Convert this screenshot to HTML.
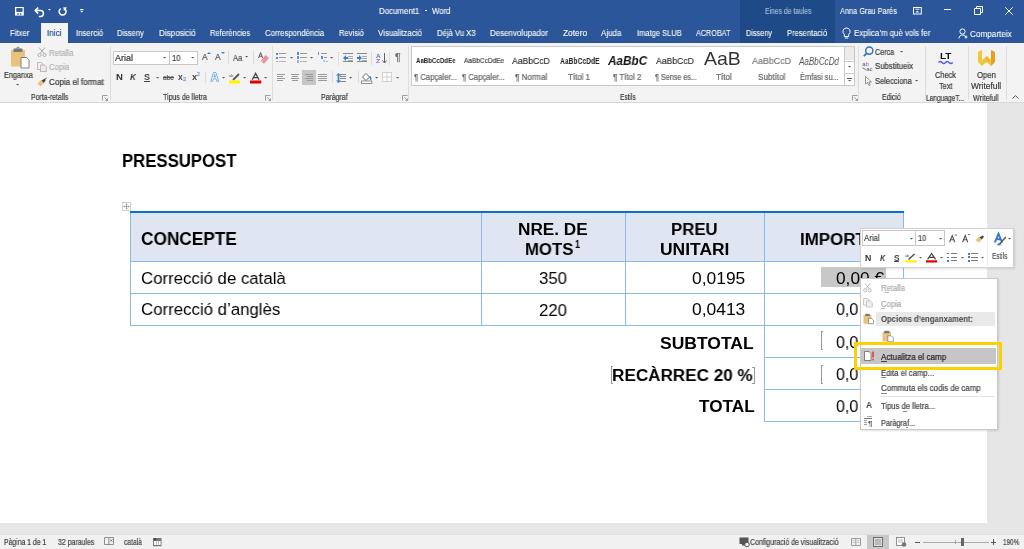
<!DOCTYPE html><html><head><meta charset="utf-8"><style>
html,body{margin:0;padding:0;width:1024px;height:549px;overflow:hidden;background:#fff;}
body{position:relative;font-family:"Liberation Sans",sans-serif;}
.t{position:absolute;white-space:nowrap;line-height:1;transform-origin:0 0;will-change:transform;}
.r{position:absolute;}
svg{position:absolute;overflow:visible;}
</style></head><body>
<div class="r" style="left:0px;top:0px;width:1024px;height:43px;background:#2b579a;"></div>
<div class="r" style="left:740px;top:0px;width:95px;height:43px;background:#1e4b87;"></div>
<div class="r" style="left:41px;top:23px;width:27px;height:20px;background:#f3f3f3;"></div>
<span class="t" style="left:9.80px;top:29.96px;font-size:8.2px;color:#fff;-webkit-text-stroke:0.08px #fff;transform:scaleX(0.9512);">Fitxer</span>
<span class="t" style="left:46.90px;top:29.96px;font-size:8.2px;color:#2b579a;-webkit-text-stroke:0.2px #2b579a;transform:scaleX(1.0003);">Inici</span>
<span class="t" style="left:75.80px;top:29.96px;font-size:8.2px;color:#fff;-webkit-text-stroke:0.08px #fff;transform:scaleX(0.9477);">Inserció</span>
<span class="t" style="left:117.20px;top:29.96px;font-size:8.2px;color:#fff;-webkit-text-stroke:0.08px #fff;transform:scaleX(0.9194);">Disseny</span>
<span class="t" style="left:158.60px;top:29.96px;font-size:8.2px;color:#fff;-webkit-text-stroke:0.08px #fff;transform:scaleX(0.9826);">Disposició</span>
<span class="t" style="left:209.50px;top:29.96px;font-size:8.2px;color:#fff;-webkit-text-stroke:0.08px #fff;transform:scaleX(0.9212);">Referències</span>
<span class="t" style="left:264.50px;top:29.96px;font-size:8.2px;color:#fff;-webkit-text-stroke:0.08px #fff;transform:scaleX(0.9490);">Correspondència</span>
<span class="t" style="left:338.90px;top:29.96px;font-size:8.2px;color:#fff;-webkit-text-stroke:0.08px #fff;transform:scaleX(0.9258);">Revisió</span>
<span class="t" style="left:378.00px;top:29.96px;font-size:8.2px;color:#fff;-webkit-text-stroke:0.08px #fff;transform:scaleX(0.9686);">Visualització</span>
<span class="t" style="left:436.70px;top:29.96px;font-size:8.2px;color:#fff;-webkit-text-stroke:0.08px #fff;transform:scaleX(0.9401);">Déjà Vu X3</span>
<span class="t" style="left:490.00px;top:29.96px;font-size:8.2px;color:#fff;-webkit-text-stroke:0.08px #fff;transform:scaleX(0.9709);">Desenvolupador</span>
<span class="t" style="left:562.60px;top:29.96px;font-size:8.2px;color:#fff;-webkit-text-stroke:0.08px #fff;transform:scaleX(1.0212);">Zotero</span>
<span class="t" style="left:601.00px;top:29.96px;font-size:8.2px;color:#fff;-webkit-text-stroke:0.08px #fff;transform:scaleX(0.9670);">Ajuda</span>
<span class="t" style="left:636.50px;top:29.96px;font-size:8.2px;color:#fff;-webkit-text-stroke:0.08px #fff;transform:scaleX(0.9190);">Imatge SLUB</span>
<span class="t" style="left:695.80px;top:29.96px;font-size:8.2px;color:#fff;-webkit-text-stroke:0.08px #fff;transform:scaleX(0.8839);">ACROBAT</span>
<span class="t" style="left:746.40px;top:29.96px;font-size:8.2px;color:#fff;-webkit-text-stroke:0.08px #fff;transform:scaleX(0.8953);">Disseny</span>
<span class="t" style="left:787.40px;top:29.96px;font-size:8.2px;color:#fff;-webkit-text-stroke:0.08px #fff;transform:scaleX(0.9285);">Presentació</span>
<span class="t" style="left:854.00px;top:29.96px;font-size:8.2px;color:#fff;-webkit-text-stroke:0.08px #fff;transform:scaleX(0.9581);">Explica’m què vols fer</span>
<span class="t" style="left:969.70px;top:30.76px;font-size:8.2px;color:#fff;-webkit-text-stroke:0.08px #fff;transform:scaleX(0.9942);">Comparteix</span>
<span class="t" style="left:378.80px;top:7.76px;font-size:8.2px;color:#fff;-webkit-text-stroke:0.08px #fff;transform:scaleX(0.9632);">Document1</span>
<div class="r" style="left:424.5px;top:10.3px;width:2.5px;height:0.7999999999999989px;background:#fff;"></div>
<span class="t" style="left:431.50px;top:7.76px;font-size:8.2px;color:#fff;-webkit-text-stroke:0.08px #fff;transform:scaleX(0.9519);">Word</span>
<span class="t" style="left:764.50px;top:7.76px;font-size:8.2px;color:#9fb4d4;-webkit-text-stroke:0.2px #9fb4d4;transform:scaleX(0.8291);">Eines de taules</span>
<span class="t" style="left:840.00px;top:7.76px;font-size:8.2px;color:#fff;-webkit-text-stroke:0.08px #fff;transform:scaleX(0.8998);">Anna Grau Parés</span>
<svg style="left:14.8px;top:6.8px" width="9" height="9" viewBox="0 0 9 9"><rect x="0" y="0" width="8.8" height="8.6" fill="#fff"/><rect x="1.3" y="1.1" width="6.2" height="3.8" fill="#2b579a"/><rect x="2.2" y="6.3" width="1.6" height="1.4" fill="#2b579a"/><rect x="4.8" y="6.3" width="1.6" height="1.4" fill="#2b579a"/></svg>
<svg style="left:34px;top:6.8px" width="11" height="9" viewBox="0 0 11 9"><path d="M1.5 3.6H6.5A2.9 2.9 0 0 1 6.5 9.4H4.8" fill="none" stroke="#fff" stroke-width="1.5"/><path d="M4.2 0.6L1.2 3.6L4.2 6.6" stroke="#fff" stroke-width="1.5" fill="none"/></svg>
<svg style="left:48.1px;top:9.45px" width="3.0" height="1.5" viewBox="0 0 3.0 1.5"><path d="M0 0H3.0L1.5 1.5Z" fill="#fff"/></svg>
<svg style="left:57.8px;top:6.8px" width="10" height="10" viewBox="0 0 10 10"><path d="M2.85 1.57A3.5 3.5 0 1 0 6.35 1.57" fill="none" stroke="#fff" stroke-width="1.5"/><path d="M5.3 0.2L9.1 0.4L5.9 3.9Z" fill="#fff"/></svg>
<svg style="left:79.5px;top:8.5px" width="4" height="4" viewBox="0 0 4 4"><rect x="0" y="0" width="3.5" height="0.9" fill="#fff"/><path d="M0 1.8H3.5L1.75 3.6Z" fill="#fff"/></svg>
<svg style="left:912.7px;top:6.7px" width="9" height="7.5" viewBox="0 0 9 7.5"><rect x="0.5" y="0.5" width="7.8" height="6.5" fill="none" stroke="#fff" stroke-width="1"/><path d="M2.4 2.2H6.4" stroke="#fff" stroke-width="0.9"/><path d="M2.6 5.6L4.4 3.6L6.2 5.6Z" fill="#fff"/></svg>
<div class="r" style="left:944.2px;top:9.3px;width:7.0px;height:1.0px;background:#fff;"></div>
<svg style="left:973.5px;top:6.3px" width="9" height="9" viewBox="0 0 9 9"><path d="M0.5 2.5H6.5V8.5H0.5Z M2.5 2.5V0.5H8.5V6.5H6.5" fill="none" stroke="#fff" stroke-width="1"/></svg>
<svg style="left:1004.5px;top:6.5px" width="8" height="8" viewBox="0 0 8 8"><path d="M0.3 0.3L7.7 7.7M7.7 0.3L0.3 7.7" stroke="#fff" stroke-width="1"/></svg>
<svg style="left:842px;top:26.5px" width="9" height="13" viewBox="0 0 9 13"><path d="M4.5 1A3.5 3.5 0 0 0 2.3 7.3V9.5H6.7V7.3A3.5 3.5 0 0 0 4.5 1Z" fill="none" stroke="#fff" stroke-width="1"/><path d="M2.8 11H6.2" stroke="#fff" stroke-width="1"/></svg>
<svg style="left:957.5px;top:28px" width="11" height="11" viewBox="0 0 11 11"><circle cx="4.5" cy="3.5" r="2.6" fill="none" stroke="#fff" stroke-width="1"/><path d="M0.8 10.5A3.8 3.8 0 0 1 8 9" fill="none" stroke="#fff" stroke-width="1"/><path d="M8 7.5V10.5M6.5 9H9.5" stroke="#fff" stroke-width="1"/></svg>
<div class="r" style="left:0px;top:43px;width:1024px;height:58.5px;background:#f3f3f3;"></div>
<div class="r" style="left:0px;top:101.5px;width:1024px;height:1.0px;background:#d8d8d8;"></div>
<div class="r" style="left:110px;top:46px;width:1px;height:54px;background:#dedede;"></div>
<div class="r" style="left:271.5px;top:46px;width:1.0px;height:54px;background:#dedede;"></div>
<div class="r" style="left:408px;top:46px;width:1px;height:54px;background:#dedede;"></div>
<div class="r" style="left:858px;top:46px;width:1px;height:54px;background:#dedede;"></div>
<div class="r" style="left:924.5px;top:46px;width:1.0px;height:54px;background:#dedede;"></div>
<div class="r" style="left:967.5px;top:46px;width:1.0px;height:54px;background:#dedede;"></div>
<div class="r" style="left:1005.5px;top:46px;width:1.0px;height:54px;background:#dedede;"></div>
<svg style="left:10px;top:46.5px" width="20" height="22" viewBox="0 0 20 22"><rect x="1" y="3" width="14" height="16.5" fill="#e9c37c"/><rect x="3.5" y="1.5" width="9" height="3.5" rx="0.8" fill="#777"/><circle cx="8" cy="1.5" r="1.3" fill="none" stroke="#777" stroke-width="0.9"/><path d="M11 10.5H16.5L19 13V21H11Z" fill="#fff" stroke="#777" stroke-width="0.9"/></svg>
<span class="t" style="left:3.80px;top:71.86px;font-size:8.2px;color:#3a3a3a;-webkit-text-stroke:0.2px #3a3a3a;transform:scaleX(0.8923);">Enganxa</span>
<svg style="left:16.4px;top:84.2px" width="3.2" height="1.6" viewBox="0 0 3.2 1.6"><path d="M0 0H3.2L1.6 1.6Z" fill="#555"/></svg>
<svg style="left:36.5px;top:47px" width="10" height="10" viewBox="0 0 10 10"><path d="M2 0.5L7 6.5M8 0.5L3 6.5" stroke="#aaa" stroke-width="1"/><circle cx="2.5" cy="8" r="1.6" fill="none" stroke="#aaa" stroke-width="0.9"/><circle cx="7.5" cy="8" r="1.6" fill="none" stroke="#aaa" stroke-width="0.9"/></svg>
<svg style="left:36.5px;top:62.2px" width="10" height="10" viewBox="0 0 10 10"><path d="M0.5 0.5H4.5L6 2V7.5H0.5Z" fill="#f3f3f3" stroke="#b8aeb8" stroke-width="0.9"/><path d="M3.5 3H7.5L9.3 4.8V9.5H3.5Z" fill="#f0eaf0" stroke="#b8aeb8" stroke-width="0.9"/></svg>
<svg style="left:36.5px;top:77.5px" width="10" height="9" viewBox="0 0 10 9"><path d="M0.5 5.5L4 2L7 5L3.5 8.5Z" fill="#e9c37c"/><path d="M4.5 2.5L7.5 0.8L8.8 2L6.8 5Z" fill="#444"/><path d="M7.5 1.5L9.5 0" stroke="#444" stroke-width="1"/></svg>
<span class="t" style="left:48.50px;top:49.66px;font-size:8.2px;color:#b2b2b2;-webkit-text-stroke:0.2px #b2b2b2;transform:scaleX(0.9592);">Retalla</span>
<span class="t" style="left:48.50px;top:64.46px;font-size:8.2px;color:#b2b2b2;-webkit-text-stroke:0.2px #b2b2b2;transform:scaleX(0.9514);">Copia</span>
<span class="t" style="left:48.80px;top:79.36px;font-size:8.2px;color:#3a3a3a;-webkit-text-stroke:0.2px #3a3a3a;transform:scaleX(0.9875);">Copia el format</span>
<span class="t" style="left:30.60px;top:94.36px;font-size:8.2px;color:#3a3a3a;-webkit-text-stroke:0.2px #3a3a3a;transform:scaleX(0.8462);">Porta-retalls</span>
<svg style="left:102px;top:95px" width="6" height="6" viewBox="0 0 6 6"><path d="M0.5 5.5V0.5H5.5" fill="none" stroke="#888" stroke-width="0.8"/><path d="M2.5 2.5L5.5 5.5M3.5 5.5H5.5V3.5" fill="none" stroke="#888" stroke-width="0.8"/></svg>
<div class="r" style="left:112.5px;top:50.5px;width:85.0px;height:14.099999999999994px;background:#fff;border:1px solid #c8c8c8;box-sizing:border-box;"></div>
<div class="r" style="left:169.2px;top:50.5px;width:1.0px;height:14.099999999999994px;background:#c8c8c8;"></div>
<span class="t" style="left:114.50px;top:55.36px;font-size:8.2px;color:#3a3a3a;-webkit-text-stroke:0.2px #3a3a3a;transform:scaleX(1.0976);">Arial</span>
<svg style="left:163.4px;top:57.0px" width="3.2" height="1.6" viewBox="0 0 3.2 1.6"><path d="M0 0H3.2L1.6 1.6Z" fill="#555"/></svg>
<span class="t" style="left:172.00px;top:55.36px;font-size:8.2px;color:#3a3a3a;-webkit-text-stroke:0.2px #3a3a3a;transform:scaleX(0.9339);">10</span>
<svg style="left:191.4px;top:57.0px" width="3.2" height="1.6" viewBox="0 0 3.2 1.6"><path d="M0 0H3.2L1.6 1.6Z" fill="#555"/></svg>
<span class="t" style="left:202.20px;top:53.40px;font-size:8.5px;color:#555;-webkit-text-stroke:0.2px #555;transform:scaleX(0.9833);">A</span>
<svg style="left:207px;top:52.2px" width="4" height="2" viewBox="0 0 4 2"><path d="M0 2L2 0L4 2Z" fill="#3c7fd0"/></svg>
<span class="t" style="left:215.40px;top:53.40px;font-size:8.5px;color:#555;-webkit-text-stroke:0.2px #555;transform:scaleX(0.9833);">A</span>
<svg style="left:220.5px;top:52.2px" width="4" height="2" viewBox="0 0 4 2"><path d="M0 0L2 2L4 0Z" fill="#3c7fd0"/></svg>
<div class="r" style="left:227.9px;top:51.2px;width:1.0px;height:12.799999999999997px;background:#dcdcdc;"></div>
<span class="t" style="left:233.00px;top:52.86px;font-size:9.5px;color:#555;-webkit-text-stroke:0.2px #555;transform:scaleX(0.7991);">Aa</span>
<svg style="left:244.70000000000002px;top:56.2px" width="3.2" height="1.6" viewBox="0 0 3.2 1.6"><path d="M0 0H3.2L1.6 1.6Z" fill="#555"/></svg>
<div class="r" style="left:253.1px;top:51.2px;width:1.0px;height:12.799999999999997px;background:#dcdcdc;"></div>
<svg style="left:257.5px;top:51.5px" width="12" height="12" viewBox="0 0 12 12"><path d="M0.6 6L2.6 0.6L4.6 6M1.3 4.2H3.9" fill="none" stroke="#555" stroke-width="1"/><path d="M2.5 9L7.5 3L11 6L6 11.8Z" fill="#e8909e"/><path d="M3.5 9.8L5.2 8" stroke="#fff" stroke-width="0.6"/></svg>
<span class="t" style="left:115.70px;top:72.46px;font-size:9.5px;color:#333;font-weight:bold;transform:scaleX(0.9503);">N</span>
<span class="t" style="left:130.00px;top:72.46px;font-size:9.5px;color:#333;font-weight:bold;font-style:italic;transform:scaleX(0.8582);">K</span>
<span class="t" style="left:144.20px;top:72.88px;font-size:9px;color:#444;font-weight:bold;transform:scaleX(0.9357);">S</span>
<div class="r" style="left:144.2px;top:80.8px;width:5.600000000000023px;height:0.9000000000000057px;background:#444;"></div>
<svg style="left:155.8px;top:76.7px" width="3.2" height="1.6" viewBox="0 0 3.2 1.6"><path d="M0 0H3.2L1.6 1.6Z" fill="#555"/></svg>
<span class="t" style="left:162.70px;top:74.35px;font-size:7.5px;color:#555;font-weight:bold;transform:scaleX(0.8193);">abc</span>
<div class="r" style="left:162.5px;top:77.3px;width:11.0px;height:0.7999999999999972px;background:#555;"></div>
<span class="t" style="left:177.90px;top:73.40px;font-size:8.5px;color:#444;font-weight:bold;transform:scaleX(0.9327);">x</span>
<span class="t" style="left:182.80px;top:77.24px;font-size:5.5px;color:#5a93d8;-webkit-text-stroke:0.2px #5a93d8;transform:scaleX(1.1138);">2</span>
<span class="t" style="left:191.80px;top:73.40px;font-size:8.5px;color:#444;font-weight:bold;transform:scaleX(1.0811);">x</span>
<span class="t" style="left:197.00px;top:71.84px;font-size:5.5px;color:#5a93d8;-webkit-text-stroke:0.2px #5a93d8;transform:scaleX(0.9173);">2</span>
<div class="r" style="left:205px;top:71.6px;width:1px;height:11.700000000000003px;background:#dcdcdc;"></div>
<svg style="left:209.5px;top:72.2px" width="10" height="10" viewBox="0 0 10 10"><path d="M0.8 9.3L3.5 0.6H5.9L8.6 9.3H6.8L6 6.8H3.4L2.6 9.3Z M3.9 5.1H5.5L4.7 2.4Z" fill="#fff" stroke="#5b9bd5" stroke-width="0.8"/></svg>
<svg style="left:221.8px;top:76.8px" width="3.2" height="1.6" viewBox="0 0 3.2 1.6"><path d="M0 0H3.2L1.6 1.6Z" fill="#555"/></svg>
<svg style="left:229px;top:72.5px" width="12" height="11" viewBox="0 0 12 11"><path d="M4 7L10 1" stroke="#555" stroke-width="1.8"/><text x="0" y="4" font-size="4" fill="#555" font-family="Liberation Sans">ab</text><rect x="0" y="7.5" width="11" height="3" fill="#fcf500"/></svg>
<svg style="left:243.1px;top:76.8px" width="3.2" height="1.6" viewBox="0 0 3.2 1.6"><path d="M0 0H3.2L1.6 1.6Z" fill="#555"/></svg>
<svg style="left:249.8px;top:72.5px" width="12" height="11" viewBox="0 0 12 11"><path d="M2.2 6.8L5.6 0.4L9 6.8M3.4 4.6H7.8" fill="none" stroke="#444" stroke-width="1.3"/><rect x="0" y="7.5" width="11.3" height="3" fill="#e50000"/></svg>
<svg style="left:263.9px;top:76.8px" width="3.2" height="1.6" viewBox="0 0 3.2 1.6"><path d="M0 0H3.2L1.6 1.6Z" fill="#555"/></svg>
<span class="t" style="left:163.00px;top:94.36px;font-size:8.2px;color:#3a3a3a;-webkit-text-stroke:0.2px #3a3a3a;transform:scaleX(0.8585);">Tipus de lletra</span>
<svg style="left:265.3px;top:95px" width="6" height="6" viewBox="0 0 6 6"><path d="M0.5 5.5V0.5H5.5" fill="none" stroke="#888" stroke-width="0.8"/><path d="M2.5 2.5L5.5 5.5M3.5 5.5H5.5V3.5" fill="none" stroke="#888" stroke-width="0.8"/></svg>
<div class="r" style="left:276px;top:53px;width:2px;height:1.7999999999999972px;background:#5a8fd0;"></div>
<div class="r" style="left:279.2px;top:53.4px;width:6.800000000000011px;height:1.0px;background:#999;"></div>
<div class="r" style="left:276px;top:57px;width:2px;height:1.7999999999999972px;background:#5a8fd0;"></div>
<div class="r" style="left:279.2px;top:57.4px;width:6.800000000000011px;height:1.0px;background:#999;"></div>
<div class="r" style="left:276px;top:60.5px;width:2px;height:1.7999999999999972px;background:#8fb3e0;"></div>
<div class="r" style="left:279.2px;top:60.9px;width:6.800000000000011px;height:1.0px;background:#b5b5b5;"></div>
<svg style="left:289.7px;top:56.800000000000004px" width="3.2" height="1.6" viewBox="0 0 3.2 1.6"><path d="M0 0H3.2L1.6 1.6Z" fill="#555"/></svg>
<div class="r" style="left:297.2px;top:52.4px;width:1.5px;height:2.8000000000000043px;background:#5a8fd0;"></div>
<div class="r" style="left:300px;top:53.4px;width:6.899999999999977px;height:1.0px;background:#999;"></div>
<div class="r" style="left:297.2px;top:56.4px;width:1.5px;height:2.8000000000000043px;background:#5a8fd0;"></div>
<div class="r" style="left:300px;top:57.4px;width:6.899999999999977px;height:1.0px;background:#999;"></div>
<div class="r" style="left:297.2px;top:59.9px;width:1.5px;height:2.8000000000000043px;background:#8fb3e0;"></div>
<div class="r" style="left:300px;top:60.9px;width:6.899999999999977px;height:1.0px;background:#b5b5b5;"></div>
<svg style="left:310.4px;top:56.800000000000004px" width="3.2" height="1.6" viewBox="0 0 3.2 1.6"><path d="M0 0H3.2L1.6 1.6Z" fill="#555"/></svg>
<div class="r" style="left:318px;top:52.2px;width:1.3000000000000114px;height:2.799999999999997px;background:#5a8fd0;"></div>
<div class="r" style="left:321px;top:53.4px;width:6.300000000000011px;height:1.0px;background:#999;"></div>
<div class="r" style="left:320.5px;top:56px;width:2.0px;height:3px;background:#5a8fd0;"></div>
<div class="r" style="left:324px;top:57px;width:3.3000000000000114px;height:1px;background:#999;"></div>
<div class="r" style="left:323px;top:59.8px;width:2px;height:2.700000000000003px;background:#a8c4e6;"></div>
<div class="r" style="left:326px;top:60.7px;width:2px;height:1.0px;background:#b5b5b5;"></div>
<svg style="left:330.09999999999997px;top:56.800000000000004px" width="3.2" height="1.6" viewBox="0 0 3.2 1.6"><path d="M0 0H3.2L1.6 1.6Z" fill="#555"/></svg>
<div class="r" style="left:338.4px;top:51.5px;width:1.0px;height:13.0px;background:#dcdcdc;"></div>
<div class="r" style="left:342.8px;top:53px;width:10.0px;height:1px;background:#888;"></div>
<div class="r" style="left:342.8px;top:61px;width:10.0px;height:1px;background:#888;"></div>
<div class="r" style="left:347.8px;top:55.5px;width:5.0px;height:1.0px;background:#aaa;"></div>
<div class="r" style="left:347.8px;top:57.5px;width:5.0px;height:1.0px;background:#aaa;"></div>
<div class="r" style="left:347.8px;top:59.5px;width:5.0px;height:1.0px;background:#aaa;"></div>
<svg style="left:342.8px;top:54.5px" width="5" height="6" viewBox="0 0 5 6"><path d="M0 3L3 0V2H5V4H3V6Z" fill="#3c7fd0"/></svg>
<div class="r" style="left:356.5px;top:53px;width:10.0px;height:1px;background:#888;"></div>
<div class="r" style="left:356.5px;top:61px;width:10.0px;height:1px;background:#888;"></div>
<div class="r" style="left:361.5px;top:55.5px;width:5.0px;height:1.0px;background:#aaa;"></div>
<div class="r" style="left:361.5px;top:57.5px;width:5.0px;height:1.0px;background:#aaa;"></div>
<div class="r" style="left:361.5px;top:59.5px;width:5.0px;height:1.0px;background:#aaa;"></div>
<svg style="left:356.5px;top:54.5px" width="5" height="6" viewBox="0 0 5 6"><path d="M5 3L2 0V2H0V4H2V6Z" fill="#3c7fd0"/></svg>
<div class="r" style="left:370.9px;top:51.5px;width:1.0px;height:13.0px;background:#dcdcdc;"></div>
<span class="t" style="left:375.80px;top:52.65px;font-size:6.2px;color:#3c7fd0;font-weight:bold;transform:scaleX(1.0305);">A</span>
<span class="t" style="left:376.20px;top:57.65px;font-size:6.2px;color:#a35cc8;font-weight:bold;transform:scaleX(1.1105);">Z</span>
<svg style="left:381.5px;top:52.5px" width="5" height="11" viewBox="0 0 5 11"><path d="M2.5 0V9.5M0.5 7.5L2.5 10L4.5 7.5" fill="none" stroke="#555" stroke-width="0.9"/></svg>
<div class="r" style="left:389.3px;top:51.5px;width:1.0px;height:13.0px;background:#dcdcdc;"></div>
<span class="t" style="left:395.40px;top:53.44px;font-size:10px;color:#6a6a6a;-webkit-text-stroke:0.2px #6a6a6a;transform:scaleX(1.0467);">¶</span>
<div class="r" style="left:302px;top:70.2px;width:13.699999999999989px;height:14.700000000000003px;background:#c6c6c6;"></div>
<div class="r" style="left:277.2px;top:74.0px;width:7.600000000000023px;height:1.0px;background:#999;"></div>
<div class="r" style="left:277.2px;top:76.1px;width:5.319999999999993px;height:1.0px;background:#999;"></div>
<div class="r" style="left:277.2px;top:78.2px;width:7.600000000000023px;height:1.0px;background:#999;"></div>
<div class="r" style="left:277.2px;top:80.3px;width:5.319999999999993px;height:1.0px;background:#999;"></div>
<div class="r" style="left:291.0px;top:74.0px;width:8.300000000000011px;height:1.0px;background:#999;"></div>
<div class="r" style="left:292.245px;top:76.1px;width:5.810000000000002px;height:1.0px;background:#999;"></div>
<div class="r" style="left:291.0px;top:78.2px;width:8.300000000000011px;height:1.0px;background:#999;"></div>
<div class="r" style="left:292.245px;top:80.3px;width:5.810000000000002px;height:1.0px;background:#999;"></div>
<div class="r" style="left:305px;top:74.0px;width:8px;height:1.0px;background:#999;"></div>
<div class="r" style="left:307.4px;top:76.1px;width:5.600000000000023px;height:1.0px;background:#999;"></div>
<div class="r" style="left:305px;top:78.2px;width:8px;height:1.0px;background:#999;"></div>
<div class="r" style="left:307.4px;top:80.3px;width:5.600000000000023px;height:1.0px;background:#999;"></div>
<div class="r" style="left:318.1px;top:74.0px;width:8.800000000000011px;height:1.0px;background:#999;"></div>
<div class="r" style="left:318.1px;top:76.1px;width:8.800000000000011px;height:1.0px;background:#999;"></div>
<div class="r" style="left:318.1px;top:78.2px;width:8.800000000000011px;height:1.0px;background:#999;"></div>
<div class="r" style="left:318.1px;top:80.3px;width:8.800000000000011px;height:1.0px;background:#999;"></div>
<div class="r" style="left:331.7px;top:71.2px;width:1.0px;height:12.299999999999997px;background:#dcdcdc;"></div>
<svg style="left:336px;top:72.5px" width="5" height="10" viewBox="0 0 5 10"><path d="M2.5 0L5 2.5H3.3V7.5H5L2.5 10L0 7.5H1.7V2.5H0Z" fill="#3c7fd0"/></svg>
<div class="r" style="left:340.4px;top:74.0px;width:5.600000000000023px;height:1.0px;background:#888;"></div>
<div class="r" style="left:340.4px;top:76.2px;width:5.600000000000023px;height:1.0px;background:#888;"></div>
<div class="r" style="left:340.4px;top:78.4px;width:5.600000000000023px;height:1.0px;background:#888;"></div>
<div class="r" style="left:340.4px;top:80.6px;width:5.600000000000023px;height:1.0px;background:#888;"></div>
<svg style="left:348.79999999999995px;top:76.60000000000001px" width="3.2" height="1.6" viewBox="0 0 3.2 1.6"><path d="M0 0H3.2L1.6 1.6Z" fill="#555"/></svg>
<div class="r" style="left:357.5px;top:71.2px;width:1.0px;height:12.299999999999997px;background:#dcdcdc;"></div>
<svg style="left:361px;top:71.5px" width="12" height="12" viewBox="0 0 12 12"><path d="M1.5 5L5 1.5L8.5 5L5 8.5Z" fill="#fff" stroke="#555" stroke-width="0.9"/><path d="M8.8 4.5Q10.5 6.5 9.5 8" fill="none" stroke="#3c7fd0" stroke-width="1.5"/><rect x="0.5" y="9" width="10.4" height="2.5" fill="#fff" stroke="#666" stroke-width="0.7"/></svg>
<svg style="left:374.9px;top:76.60000000000001px" width="3.2" height="1.6" viewBox="0 0 3.2 1.6"><path d="M0 0H3.2L1.6 1.6Z" fill="#555"/></svg>
<svg style="left:382.2px;top:72.2px" width="10" height="10" viewBox="0 0 10 10"><rect x="0.5" y="0.5" width="9" height="9" fill="#fff" stroke="#ccc" stroke-width="0.9"/><path d="M5 0.5V9.5M0.5 5H9.5" stroke="#ccc" stroke-width="0.9"/></svg>
<svg style="left:395.79999999999995px;top:76.60000000000001px" width="3.2" height="1.6" viewBox="0 0 3.2 1.6"><path d="M0 0H3.2L1.6 1.6Z" fill="#555"/></svg>
<span class="t" style="left:321.20px;top:94.36px;font-size:8.2px;color:#3a3a3a;-webkit-text-stroke:0.2px #3a3a3a;transform:scaleX(0.8479);">Paràgraf</span>
<svg style="left:401.5px;top:95px" width="6" height="6" viewBox="0 0 6 6"><path d="M0.5 5.5V0.5H5.5" fill="none" stroke="#888" stroke-width="0.8"/><path d="M2.5 2.5L5.5 5.5M3.5 5.5H5.5V3.5" fill="none" stroke="#888" stroke-width="0.8"/></svg>
<div class="r" style="left:411.4px;top:46.4px;width:443.6px;height:39.6px;background:#fff;border:1px solid #c8c8c8;box-sizing:border-box;"></div>
<span class="t" style="left:414.20px;top:73.96px;font-size:8.2px;color:#666;-webkit-text-stroke:0.2px #666;transform:scaleX(0.9394);">¶ Capçaler...</span>
<span class="t" style="left:462.40px;top:73.96px;font-size:8.2px;color:#666;-webkit-text-stroke:0.2px #666;transform:scaleX(0.9351);">¶ Capçaler...</span>
<span class="t" style="left:515.00px;top:73.96px;font-size:8.2px;color:#666;-webkit-text-stroke:0.2px #666;transform:scaleX(0.9750);">¶ Normal</span>
<span class="t" style="left:568.40px;top:73.96px;font-size:8.2px;color:#666;-webkit-text-stroke:0.2px #666;transform:scaleX(0.9651);">Títol 1</span>
<span class="t" style="left:613.00px;top:73.96px;font-size:8.2px;color:#666;-webkit-text-stroke:0.2px #666;transform:scaleX(0.9722);">¶ Títol 2</span>
<span class="t" style="left:654.50px;top:73.96px;font-size:8.2px;color:#666;-webkit-text-stroke:0.2px #666;transform:scaleX(0.8801);">¶ Sense es...</span>
<span class="t" style="left:715.75px;top:73.96px;font-size:8.2px;color:#666;-webkit-text-stroke:0.2px #666;transform:scaleX(0.9875);">Títol</span>
<span class="t" style="left:757.70px;top:73.96px;font-size:8.2px;color:#666;-webkit-text-stroke:0.2px #666;transform:scaleX(0.9821);">Subtítol</span>
<span class="t" style="left:800.00px;top:73.96px;font-size:8.2px;color:#666;-webkit-text-stroke:0.2px #666;transform:scaleX(0.9044);">Èmfasi su...</span>
<span class="t" style="left:416.00px;top:57.15px;font-size:7.5px;color:#222;font-weight:bold;transform:scaleX(0.8172);">AaBbCcDdEe</span>
<span class="t" style="left:463.50px;top:57.15px;font-size:7.5px;color:#444;-webkit-text-stroke:0.2px #444;transform:scaleX(0.8687);">AaBbCcDdEe</span>
<span class="t" style="left:511.80px;top:55.77px;font-size:9.6px;color:#333;-webkit-text-stroke:0.2px #333;transform:scaleX(0.8946);">AaBbCcD</span>
<span class="t" style="left:560.00px;top:56.87px;font-size:8.3px;color:#222;font-weight:bold;transform:scaleX(0.8100);">AaBbCcDdE</span>
<span class="t" style="left:608.29px;top:54.72px;font-size:12.5px;color:#111;font-weight:bold;font-style:italic;transform:scaleX(0.9377);">AaBbC</span>
<span class="t" style="left:655.70px;top:55.77px;font-size:9.6px;color:#333;-webkit-text-stroke:0.2px #333;transform:scaleX(0.8969);">AaBbCcD</span>
<span class="t" style="left:704.00px;top:49.84px;font-size:18.5px;color:#333;transform:scaleX(1.0511);">AaB</span>
<span class="t" style="left:751.50px;top:55.77px;font-size:9.6px;color:#7a7a7a;-webkit-text-stroke:0.2px #7a7a7a;transform:scaleX(0.9254);">AaBbCcD</span>
<span class="t" style="left:799.25px;top:55.91px;font-size:10.5px;color:#555;font-style:italic;transform:scaleX(0.7701);font-family:"Liberation Serif",serif;">AaBbCcDd</span>
<div class="r" style="left:844px;top:46.4px;width:11px;height:39.6px;background:#fff;border:1px solid #c8c8c8;box-sizing:border-box;"></div>
<div class="r" style="left:845px;top:47.4px;width:9px;height:13.100000000000001px;background:#ececec;"></div>
<div class="r" style="left:844px;top:60.5px;width:11px;height:1.0px;background:#c8c8c8;"></div>
<div class="r" style="left:844px;top:72.5px;width:11px;height:1.0px;background:#c8c8c8;"></div>
<svg style="left:847.9px;top:66.0px" width="3.2" height="1.6" viewBox="0 0 3.2 1.6"><path d="M0 0H3.2L1.6 1.6Z" fill="#555"/></svg>
<div class="r" style="left:847.3px;top:77.5px;width:4.400000000000091px;height:0.7999999999999972px;background:#555;"></div>
<svg style="left:847.9px;top:79.7px" width="3.2" height="1.6" viewBox="0 0 3.2 1.6"><path d="M0 0H3.2L1.6 1.6Z" fill="#555"/></svg>
<span class="t" style="left:620.00px;top:94.36px;font-size:8.2px;color:#3a3a3a;-webkit-text-stroke:0.2px #3a3a3a;transform:scaleX(0.8037);">Estils</span>
<svg style="left:852px;top:95px" width="6" height="6" viewBox="0 0 6 6"><path d="M0.5 5.5V0.5H5.5" fill="none" stroke="#888" stroke-width="0.8"/><path d="M2.5 2.5L5.5 5.5M3.5 5.5H5.5V3.5" fill="none" stroke="#888" stroke-width="0.8"/></svg>
<svg style="left:862.5px;top:45.5px" width="11" height="11" viewBox="0 0 11 11"><circle cx="6.3" cy="4.6" r="3.6" fill="none" stroke="#2f6fbd" stroke-width="1.4"/><path d="M3.6 7.4L0.8 10.2" stroke="#2f6fbd" stroke-width="1.8"/></svg>
<span class="t" style="left:874.90px;top:49.26px;font-size:8.2px;color:#3a3a3a;-webkit-text-stroke:0.2px #3a3a3a;transform:scaleX(0.8770);">Cerca</span>
<svg style="left:899.6999999999999px;top:51.2px" width="3.2" height="1.6" viewBox="0 0 3.2 1.6"><path d="M0 0H3.2L1.6 1.6Z" fill="#555"/></svg>
<svg style="left:862px;top:61px" width="12" height="10.5" viewBox="0 0 12 10.5"><text x="0.3" y="4.6" font-size="6" font-family="Liberation Sans" fill="#555">a</text><text x="3.8" y="4.6" font-size="6" font-family="Liberation Sans" fill="#9b59c6">b</text><text x="4.2" y="10" font-size="6" font-family="Liberation Sans" fill="#555">ac</text><path d="M0.5 6.8L3.8 8.6" stroke="#3c7fd0" stroke-width="1"/></svg>
<span class="t" style="left:874.90px;top:63.46px;font-size:8.2px;color:#3a3a3a;-webkit-text-stroke:0.2px #3a3a3a;transform:scaleX(0.9502);">Substitueix</span>
<svg style="left:864.5px;top:75.5px" width="7" height="10" viewBox="0 0 7 10"><path d="M0.5 0.5V8L2.5 6.5L4 9.5L5.2 9L3.8 6H6.5Z" fill="#fff" stroke="#777" stroke-width="0.8"/></svg>
<span class="t" style="left:874.90px;top:77.76px;font-size:8.2px;color:#3a3a3a;-webkit-text-stroke:0.2px #3a3a3a;transform:scaleX(0.9168);">Selecciona</span>
<svg style="left:914.8px;top:79.8px" width="3.2" height="1.6" viewBox="0 0 3.2 1.6"><path d="M0 0H3.2L1.6 1.6Z" fill="#555"/></svg>
<span class="t" style="left:881.75px;top:94.36px;font-size:8.2px;color:#3a3a3a;-webkit-text-stroke:0.2px #3a3a3a;transform:scaleX(0.8391);">Edició</span>
<span class="t" style="left:939.80px;top:51.46px;font-size:9.5px;color:#111;font-weight:bold;transform:scaleX(1.0526);">LT</span>
<svg style="left:938px;top:59.8px" width="16" height="4.5" viewBox="0 0 16 4.5"><path d="M0.5 2.5Q2.3 0.5 4 2.5T7.5 2.5T11 2.5T14.8 2.5" fill="none" stroke="#5a5af0" stroke-width="1.3"/></svg>
<span class="t" style="left:934.90px;top:72.36px;font-size:8.2px;color:#3a3a3a;-webkit-text-stroke:0.2px #3a3a3a;transform:scaleX(0.9018);">Check</span>
<span class="t" style="left:938.80px;top:82.96px;font-size:8.2px;color:#3a3a3a;-webkit-text-stroke:0.2px #3a3a3a;transform:scaleX(0.8905);">Text</span>
<span class="t" style="left:926.00px;top:94.86px;font-size:8.2px;color:#3a3a3a;-webkit-text-stroke:0.2px #3a3a3a;transform:scaleX(0.8053);">LanguageT...</span>
<svg style="left:977.5px;top:49.5px" width="17" height="16" viewBox="0 0 17 16"><path d="M0 2L4 0V10L8.5 6L13 10V0L17 2V12L13 16L8.5 12L4 16L0 12Z" fill="#f3c53a"/><path d="M13 10V0L17 2V12L13 16Z" fill="#e8a020"/><path d="M8.5 6L13 10L8.5 12Z" fill="#f0b530"/></svg>
<span class="t" style="left:976.70px;top:72.36px;font-size:8.2px;color:#3a3a3a;-webkit-text-stroke:0.2px #3a3a3a;transform:scaleX(0.9427);">Open</span>
<span class="t" style="left:970.80px;top:82.96px;font-size:8.2px;color:#3a3a3a;-webkit-text-stroke:0.2px #3a3a3a;transform:scaleX(1.0245);">Writefull</span>
<span class="t" style="left:973.40px;top:94.86px;font-size:8.2px;color:#3a3a3a;-webkit-text-stroke:0.2px #3a3a3a;transform:scaleX(0.8752);">Writefull</span>
<svg style="left:1011.5px;top:95px" width="7" height="4" viewBox="0 0 7 4"><path d="M0.5 3.5L3.5 0.7L6.5 3.5" fill="none" stroke="#555" stroke-width="1"/></svg>
<div class="r" style="left:987px;top:102.5px;width:37px;height:431.5px;background:#e6e6e6;"></div>
<div class="r" style="left:0px;top:523px;width:987px;height:11px;background:#e6e6e6;"></div>
<div class="r" style="left:0px;top:534px;width:1024px;height:15px;background:#f1f1f1;"></div>
<div class="r" style="left:0px;top:534px;width:1024px;height:1px;background:#e0e0e0;"></div>
<svg style="left:121.5px;top:202.3px" width="9" height="9" viewBox="0 0 9 9"><rect x="0.5" y="0.5" width="8" height="8" fill="#fff" stroke="#c4c4c4" stroke-width="0.8"/><path d="M4.5 1.8V7.2M1.8 4.5H7.2" stroke="#8a8a8a" stroke-width="0.7"/><path d="M3.5 2.6L4.5 1.6L5.5 2.6M3.5 6.4L4.5 7.4L5.5 6.4M2.6 3.5L1.6 4.5L2.6 5.5M6.4 3.5L7.4 4.5L6.4 5.5" fill="none" stroke="#8a8a8a" stroke-width="0.6"/></svg>
<span class="t" style="left:122.30px;top:153.13px;font-size:17.8px;color:#000;font-weight:bold;transform:scaleX(0.9419);">PRESSUPOST</span>
<div class="r" style="left:130.5px;top:213px;width:773.0px;height:48px;background:#e0e6f1;"></div>
<div class="r" style="left:130px;top:261px;width:774px;height:1px;background:#88bbe8;"></div>
<div class="r" style="left:130px;top:293px;width:774px;height:1px;background:#88bbe8;"></div>
<div class="r" style="left:130px;top:325px;width:774px;height:1px;background:#88bbe8;"></div>
<div class="r" style="left:764px;top:357px;width:140px;height:1px;background:#88bbe8;"></div>
<div class="r" style="left:764px;top:389px;width:140px;height:1px;background:#88bbe8;"></div>
<div class="r" style="left:764px;top:421px;width:140px;height:1px;background:#88bbe8;"></div>
<div class="r" style="left:130px;top:211px;width:1px;height:115px;background:#88bbe8;"></div>
<div class="r" style="left:481px;top:213px;width:1px;height:113px;background:#88bbe8;"></div>
<div class="r" style="left:625px;top:213px;width:1px;height:113px;background:#88bbe8;"></div>
<div class="r" style="left:764px;top:213px;width:1px;height:113px;background:#88bbe8;"></div>
<div class="r" style="left:903px;top:211px;width:1px;height:115px;background:#88bbe8;"></div>
<div class="r" style="left:764px;top:326px;width:1px;height:96px;background:#88bbe8;"></div>
<div class="r" style="left:903px;top:326px;width:1px;height:96px;background:#88bbe8;"></div>
<div class="r" style="left:130px;top:211px;width:774px;height:2px;background:#0b6fce;"></div>
<span class="t" style="left:141.40px;top:230.60px;font-size:17.6px;color:#000;font-weight:bold;transform:scaleX(0.9809);">CONCEPTE</span>
<span class="t" style="left:518.30px;top:221.44px;font-size:17.2px;color:#000;font-weight:bold;transform:scaleX(0.9965);">NRE. DE</span>
<span class="t" style="left:525.30px;top:240.54px;font-size:17.2px;color:#000;font-weight:bold;transform:scaleX(0.9737);">MOTS</span>
<span class="t" style="left:575.30px;top:239.09px;font-size:11px;color:#000;font-weight:bold;transform:scaleX(0.8190);">1</span>
<span class="t" style="left:671.00px;top:221.24px;font-size:17.2px;color:#000;font-weight:bold;transform:scaleX(0.9767);">PREU</span>
<span class="t" style="left:659.60px;top:240.54px;font-size:17.2px;color:#000;font-weight:bold;transform:scaleX(1.0153);">UNITARI</span>
<span class="t" style="left:800.40px;top:230.94px;font-size:17.2px;color:#000;font-weight:bold;transform:scaleX(0.9855);">IMPORT</span>
<span class="t" style="left:141.40px;top:269.74px;font-size:17.2px;color:#000;transform:scaleX(0.9773);">Correcció de català</span>
<span class="t" style="left:141.40px;top:301.44px;font-size:17.2px;color:#000;transform:scaleX(0.9788);">Correcció d’anglès</span>
<span class="t" style="left:539.00px;top:269.94px;font-size:17.2px;color:#000;transform:scaleX(0.9783);">350</span>
<span class="t" style="left:539.00px;top:301.54px;font-size:17.2px;color:#000;transform:scaleX(0.9783);">220</span>
<span class="t" style="left:692.30px;top:269.64px;font-size:17.2px;color:#000;transform:scaleX(1.0127);">0,0195</span>
<span class="t" style="left:692.30px;top:301.24px;font-size:17.2px;color:#000;transform:scaleX(1.0127);">0,0413</span>
<span class="t" style="left:660.20px;top:335.04px;font-size:17.2px;color:#000;font-weight:bold;transform:scaleX(1.0183);">SUBTOTAL</span>
<span class="t" style="left:612.30px;top:367.24px;font-size:17.2px;color:#000;font-weight:bold;transform:scaleX(0.9953);">RECÀRREC 20 %</span>
<span class="t" style="left:698.50px;top:398.44px;font-size:17.2px;color:#000;font-weight:bold;transform:scaleX(0.9941);">TOTAL</span>
<div class="r" style="left:610.5px;top:365.5px;width:1.0px;height:18.5px;background:#999;"></div>
<div class="r" style="left:610.5px;top:365.5px;width:2.5px;height:1.0px;background:#999;"></div>
<div class="r" style="left:610.5px;top:383px;width:2.5px;height:1px;background:#999;"></div>
<div class="r" style="left:753.5px;top:366.9px;width:1.0px;height:17.100000000000023px;background:#999;"></div>
<div class="r" style="left:752px;top:366.9px;width:2.5px;height:1.0px;background:#999;"></div>
<div class="r" style="left:752px;top:383px;width:2.5px;height:1px;background:#999;"></div>
<div class="r" style="left:821.2px;top:267.4px;width:64.79999999999995px;height:19.400000000000034px;background:#c8c8c8;"></div>
<span class="t" style="left:836.25px;top:269.54px;font-size:17.2px;color:#000;transform:scaleX(1.0049);">0,00 €</span>
<span class="t" style="left:836.25px;top:301.24px;font-size:17.2px;color:#000;transform:scaleX(0.9350);">0,0</span>
<span class="t" style="left:836.25px;top:333.74px;font-size:17.2px;color:#000;transform:scaleX(0.9350);">0,0</span>
<span class="t" style="left:836.25px;top:365.94px;font-size:17.2px;color:#000;transform:scaleX(0.9350);">0,0</span>
<span class="t" style="left:836.25px;top:398.14px;font-size:17.2px;color:#000;transform:scaleX(0.9350);">0,0</span>
<div class="r" style="left:820.5px;top:331px;width:1.0px;height:19px;background:#999;"></div>
<div class="r" style="left:820.5px;top:331px;width:2.5px;height:1px;background:#999;"></div>
<div class="r" style="left:820.5px;top:349px;width:2.5px;height:1px;background:#999;"></div>
<div class="r" style="left:820.5px;top:364.6px;width:1.0px;height:19.0px;background:#999;"></div>
<div class="r" style="left:820.5px;top:364.6px;width:2.5px;height:1.0px;background:#999;"></div>
<div class="r" style="left:820.5px;top:382.6px;width:2.5px;height:1.0px;background:#999;"></div>
<span class="t" style="left:3.50px;top:539.16px;font-size:8.2px;color:#444;-webkit-text-stroke:0.2px #444;transform:scaleX(0.8351);">Pàgina 1 de 1</span>
<span class="t" style="left:57.50px;top:539.16px;font-size:8.2px;color:#444;-webkit-text-stroke:0.2px #444;transform:scaleX(0.8461);">32 paraules</span>
<svg style="left:104px;top:537.3px" width="10" height="8.5" viewBox="0 0 10 8.5"><path d="M0.5 0.5H4.8V7.5H0.5Z M4.8 0.5H9.5V7.5H4.8" fill="none" stroke="#777" stroke-width="0.8"/><path d="M6.3 2.5L8.3 4.5M8.3 2.5L6.3 4.5" stroke="#555" stroke-width="0.8"/></svg>
<span class="t" style="left:123.90px;top:539.16px;font-size:8.2px;color:#444;-webkit-text-stroke:0.2px #444;transform:scaleX(0.8221);">català</span>
<svg style="left:153px;top:537.8px" width="8.5" height="8.2" viewBox="0 0 8.5 8.2"><rect x="0" y="0" width="8.5" height="8.2" fill="#777"/><rect x="1" y="3" width="2" height="4" fill="#fff"/><rect x="3.5" y="3" width="2" height="4" fill="#fff"/><rect x="6" y="3" width="1.6" height="4" fill="#fff"/><circle cx="2" cy="1.3" r="1.2" fill="#444"/></svg>
<svg style="left:738.5px;top:536.5px" width="11" height="10" viewBox="0 0 11 10"><rect x="0.5" y="0.5" width="9" height="6.5" fill="#555"/><rect x="3" y="7" width="4" height="1.5" fill="#555"/><circle cx="8" cy="7.5" r="2.3" fill="#f1f1f1" stroke="#555" stroke-width="1"/></svg>
<span class="t" style="left:749.70px;top:539.16px;font-size:8.2px;color:#444;-webkit-text-stroke:0.2px #444;transform:scaleX(0.8525);">Configuració de visualització</span>
<svg style="left:851px;top:537.5px" width="10" height="8" viewBox="0 0 10 8"><path d="M0.5 0.5H4.8V7.5H0.5Z M4.8 0.5H9.5V7.5H4.8" fill="none" stroke="#888" stroke-width="0.8"/><path d="M1.5 2.5H3.8M1.5 4.5H3.8M5.8 2.5H8.5M5.8 4.5H8.5" stroke="#aaa" stroke-width="0.6"/></svg>
<div class="r" style="left:867px;top:535px;width:22px;height:14px;background:#c8c8c8;"></div>
<svg style="left:873.4px;top:537px" width="10" height="10" viewBox="0 0 10 10"><rect x="0.5" y="0.5" width="9" height="9" fill="#ddd" stroke="#666" stroke-width="0.9"/><path d="M2 3H8M2 5H8M2 7H8" stroke="#777" stroke-width="0.7"/></svg>
<svg style="left:896px;top:537px" width="10.5" height="10" viewBox="0 0 10.5 10"><rect x="0.5" y="0.5" width="8" height="8" fill="#fff" stroke="#777" stroke-width="0.8"/><path d="M2 3H7M2 5H7" stroke="#999" stroke-width="0.7"/><circle cx="8" cy="7.5" r="2.3" fill="#777"/></svg>
<div class="r" style="left:915.2px;top:541.6px;width:4.7999999999999545px;height:1.0px;background:#555;"></div>
<div class="r" style="left:923px;top:541.8px;width:65.60000000000002px;height:0.6000000000000227px;background:#aaa;"></div>
<div class="r" style="left:955.2px;top:539.8px;width:0.7999999999999545px;height:4.400000000000091px;background:#aaa;"></div>
<div class="r" style="left:961px;top:538px;width:3.2000000000000455px;height:7.7999999999999545px;background:#666;"></div>
<div class="r" style="left:990.9px;top:541.6px;width:5.399999999999977px;height:1.0px;background:#555;"></div>
<div class="r" style="left:993.1px;top:539.4px;width:1.0px;height:5.399999999999977px;background:#555;"></div>
<span class="t" style="left:1003.00px;top:539.16px;font-size:8.2px;color:#444;-webkit-text-stroke:0.2px #444;transform:scaleX(0.7765);">190%</span>
<div class="r" style="left:860px;top:227.8px;width:153.5px;height:40.5px;background:#fff;border:1px solid #d0d0d0;box-sizing:border-box;box-shadow:1px 1px 2px rgba(0,0,0,.12);"></div>
<div class="r" style="left:862.4px;top:230.3px;width:82.39999999999998px;height:16.19999999999999px;background:#fff;border:1px solid #c8c8c8;box-sizing:border-box;"></div>
<div class="r" style="left:915.2px;top:230.3px;width:1.0px;height:16.19999999999999px;background:#c8c8c8;"></div>
<span class="t" style="left:864.10px;top:235.16px;font-size:8.2px;color:#444;-webkit-text-stroke:0.2px #444;transform:scaleX(0.9543);">Arial</span>
<svg style="left:909.8px;top:237.7px" width="3.2" height="1.6" viewBox="0 0 3.2 1.6"><path d="M0 0H3.2L1.6 1.6Z" fill="#555"/></svg>
<span class="t" style="left:917.70px;top:235.16px;font-size:8.2px;color:#444;-webkit-text-stroke:0.2px #444;transform:scaleX(0.9119);">10</span>
<svg style="left:939.1999999999999px;top:237.7px" width="3.2" height="1.6" viewBox="0 0 3.2 1.6"><path d="M0 0H3.2L1.6 1.6Z" fill="#555"/></svg>
<svg style="left:949px;top:233.5px" width="9" height="9" viewBox="0 0 9 9"><path d="M0.6 8.3L3.2 1.5L5.8 8.3M1.6 5.8H4.8" fill="none" stroke="#555" stroke-width="1.1"/><path d="M5.6 1.4L7 0L8.4 1.4Z" fill="#2b6cc4"/></svg>
<svg style="left:962px;top:233.5px" width="9" height="9" viewBox="0 0 9 9"><path d="M0.6 8.3L3.2 1.5L5.8 8.3M1.6 5.8H4.8" fill="none" stroke="#555" stroke-width="1.1"/><path d="M5.6 0L7 1.4L8.4 0Z" fill="#2b6cc4"/></svg>
<svg style="left:975px;top:234.5px" width="10" height="8" viewBox="0 0 10 8"><path d="M0.5 5L4 1.8L7 4.6L3.5 7.8Z" fill="#e9c37c"/><path d="M4.5 2.2L7.6 0.6L9 1.8L6.8 4.6Z" fill="#444"/></svg>
<div class="r" style="left:986.7px;top:229.5px;width:1.0px;height:36.10000000000002px;background:#eeeeee;"></div>
<svg style="left:993.5px;top:232.5px" width="13" height="12.5" viewBox="0 0 13 12.5"><path d="M0.8 9.5L4.5 0.8L8.2 9.5M2.2 6.2H6.8" fill="none" stroke="#3a78c4" stroke-width="1.9"/><path d="M5 11.8L11.8 4" stroke="#555" stroke-width="1.4"/><path d="M2.5 12.2H7.5L5 10Z" fill="#3a78c4"/></svg>
<svg style="left:1008.1px;top:238.2px" width="3.2" height="1.6" viewBox="0 0 3.2 1.6"><path d="M0 0H3.2L1.6 1.6Z" fill="#555"/></svg>
<span class="t" style="left:991.50px;top:252.96px;font-size:8.2px;color:#555;-webkit-text-stroke:0.2px #555;transform:scaleX(0.7807);">Estils</span>
<span class="t" style="left:865.20px;top:254.10px;font-size:8.5px;color:#333;font-weight:bold;transform:scaleX(1.0294);">N</span>
<span class="t" style="left:879.80px;top:254.10px;font-size:8.5px;color:#333;font-weight:bold;font-style:italic;transform:scaleX(0.8543);">K</span>
<span class="t" style="left:893.80px;top:254.10px;font-size:8.5px;color:#444;font-weight:bold;transform:scaleX(0.9553);">S</span>
<div class="r" style="left:893.8px;top:261.2px;width:5.400000000000091px;height:0.8000000000000114px;background:#444;"></div>
<svg style="left:904.5px;top:253px" width="11.5" height="10" viewBox="0 0 11.5 10"><path d="M3.5 6.5L9.5 1" stroke="#555" stroke-width="1.6"/><text x="0" y="3.5" font-size="3.8" fill="#555" font-family="Liberation Sans">ab</text><rect x="0" y="7.3" width="11.5" height="2.2" fill="#fcf500"/></svg>
<svg style="left:919.2px;top:256.55px" width="3.0" height="1.5" viewBox="0 0 3.0 1.5"><path d="M0 0H3.0L1.5 1.5Z" fill="#555"/></svg>
<svg style="left:925.6px;top:253px" width="11.2" height="10" viewBox="0 0 11.2 10"><path d="M1.6 6.4L5.6 0.5L9.6 6.4M3 4.4H8.2" fill="none" stroke="#444" stroke-width="1.2"/><rect x="0" y="7.3" width="11.2" height="2.2" fill="#e50000"/></svg>
<svg style="left:939.6px;top:256.55px" width="3.0" height="1.5" viewBox="0 0 3.0 1.5"><path d="M0 0H3.0L1.5 1.5Z" fill="#555"/></svg>
<div class="r" style="left:947px;top:252.8px;width:2px;height:1.5999999999999943px;background:#3c7fd0;"></div>
<div class="r" style="left:950.5px;top:253.10000000000002px;width:6.2999999999999545px;height:0.8999999999999773px;background:#777;"></div>
<div class="r" style="left:947px;top:256.5px;width:2px;height:1.6000000000000227px;background:#3c7fd0;"></div>
<div class="r" style="left:950.5px;top:256.8px;width:6.2999999999999545px;height:0.8999999999999773px;background:#777;"></div>
<div class="r" style="left:947px;top:260px;width:2px;height:1.6000000000000227px;background:#3c7fd0;"></div>
<div class="r" style="left:950.5px;top:260.3px;width:6.2999999999999545px;height:0.8999999999999773px;background:#777;"></div>
<svg style="left:960.5px;top:256.65px" width="3.0" height="1.5" viewBox="0 0 3.0 1.5"><path d="M0 0H3.0L1.5 1.5Z" fill="#555"/></svg>
<div class="r" style="left:968px;top:252.5px;width:1.6000000000000227px;height:2.3000000000000114px;background:#3c7fd0;"></div>
<div class="r" style="left:971px;top:253.10000000000002px;width:6.7000000000000455px;height:0.8999999999999773px;background:#777;"></div>
<div class="r" style="left:968px;top:256.2px;width:1.6000000000000227px;height:2.3000000000000114px;background:#3c7fd0;"></div>
<div class="r" style="left:971px;top:256.8px;width:6.7000000000000455px;height:0.8999999999999773px;background:#777;"></div>
<div class="r" style="left:968px;top:259.7px;width:1.6000000000000227px;height:2.3000000000000114px;background:#3c7fd0;"></div>
<div class="r" style="left:971px;top:260.3px;width:6.7000000000000455px;height:0.8999999999999773px;background:#777;"></div>
<svg style="left:981.1px;top:256.65px" width="3.0" height="1.5" viewBox="0 0 3.0 1.5"><path d="M0 0H3.0L1.5 1.5Z" fill="#555"/></svg>
<div class="r" style="left:859.6px;top:278.2px;width:138.39999999999998px;height:151.8px;background:#fff;border:1px solid #c8c8c8;box-sizing:border-box;box-shadow:1px 1px 2px rgba(0,0,0,.12);"></div>
<div class="r" style="left:876.2px;top:312.2px;width:118.79999999999995px;height:13.800000000000011px;background:#e9e9e9;"></div>
<div class="r" style="left:861px;top:347.7px;width:134.70000000000005px;height:16.100000000000023px;background:#c6c6c6;"></div>
<div class="r" style="left:881px;top:396.3px;width:114px;height:1.0px;background:#e3e3e3;"></div>
<svg style="left:863.2px;top:282.8px" width="9" height="9.5" viewBox="0 0 9 9.5"><path d="M2 0.5L6.5 6M7 0.5L2.5 6" stroke="#b0b0b0" stroke-width="0.9"/><circle cx="2.2" cy="7.3" r="1.6" fill="none" stroke="#b0b0b0" stroke-width="0.8"/><circle cx="6.8" cy="7.3" r="1.6" fill="none" stroke="#b0b0b0" stroke-width="0.8"/></svg>
<svg style="left:863px;top:298px" width="10" height="9.5" viewBox="0 0 10 9.5"><path d="M0.5 0.5H4.5L6 2V7H0.5Z" fill="#f6f6f6" stroke="#bbb" stroke-width="0.8"/><path d="M3.5 2.8H7.3L9.3 4.8V9H3.5Z" fill="#f2eef2" stroke="#bbb" stroke-width="0.8"/></svg>
<svg style="left:863.2px;top:313.3px" width="11" height="11" viewBox="0 0 11 11"><rect x="0.5" y="1.8" width="8" height="9" fill="#e9c37c"/><rect x="2.3" y="0.8" width="4.4" height="2.2" fill="#777"/><path d="M5.5 5.5H8.8L10.5 7.2V10.7H5.5Z" fill="#fff" stroke="#777" stroke-width="0.7"/></svg>
<svg style="left:881.5px;top:329.8px" width="12" height="12" viewBox="0 0 12 12"><rect x="0.5" y="2" width="8.5" height="9.5" fill="#e9c37c"/><rect x="2.3" y="0.8" width="5" height="2.4" fill="#777"/><path d="M5.8 5.8H9.3L11.3 7.8V11.8H5.8Z" fill="#fff" stroke="#777" stroke-width="0.7"/></svg>
<svg style="left:863.5px;top:351px" width="11" height="10" viewBox="0 0 11 10"><path d="M0.5 0.5H5L7 2.5V9.5H0.5Z" fill="#fff" stroke="#666" stroke-width="0.8"/><rect x="8.3" y="0.5" width="1.5" height="6" fill="#e03a1e"/><rect x="8.3" y="7.8" width="1.5" height="1.6" fill="#e03a1e"/></svg>
<span class="t" style="left:880.60px;top:285.06px;font-size:8.2px;color:#ababab;-webkit-text-stroke:0.2px #ababab;transform:scaleX(0.9435);">Retalla</span>
<span class="t" style="left:880.60px;top:301.16px;font-size:8.2px;color:#ababab;-webkit-text-stroke:0.2px #ababab;transform:scaleX(0.9514);">Copia</span>
<span class="t" style="left:881.00px;top:315.76px;font-size:8.2px;color:#444;font-weight:bold;transform:scaleX(0.9413);">Opcions d’enganxament:</span>
<span class="t" style="left:881.00px;top:353.96px;font-size:8.2px;color:#222;-webkit-text-stroke:0.2px #222;transform:scaleX(0.9798);">Actualitza el camp</span>
<span class="t" style="left:881.00px;top:369.76px;font-size:8.2px;color:#444;-webkit-text-stroke:0.2px #444;transform:scaleX(0.9416);">Edita el camp...</span>
<span class="t" style="left:881.00px;top:385.26px;font-size:8.2px;color:#444;-webkit-text-stroke:0.2px #444;transform:scaleX(0.9648);">Commuta els codis de camp</span>
<span class="t" style="left:865.50px;top:401.28px;font-size:9px;color:#444;font-weight:bold;transform:scaleX(0.9259);">A</span>
<span class="t" style="left:881.00px;top:403.16px;font-size:8.2px;color:#444;-webkit-text-stroke:0.2px #444;transform:scaleX(0.9342);">Tipus de lletra...</span>
<div class="r" style="left:867px;top:416px;width:5px;height:1px;background:#aaa;"></div>
<div class="r" style="left:864px;top:418px;width:8px;height:1px;background:#777;"></div>
<div class="r" style="left:864px;top:420px;width:3px;height:1px;background:#999;"></div>
<div class="r" style="left:864px;top:422px;width:3px;height:1px;background:#999;"></div>
<div class="r" style="left:864px;top:424px;width:3px;height:1px;background:#999;"></div>
<span class="t" style="left:868.00px;top:419.73px;font-size:8px;color:#555;font-weight:bold;transform:scaleX(0.9459);">¶</span>
<span class="t" style="left:881.00px;top:419.56px;font-size:8.2px;color:#444;-webkit-text-stroke:0.2px #444;transform:scaleX(0.8931);">Paràgraf...</span>
<div class="r" style="left:881px;top:361px;width:5.5px;height:0.6999999999999886px;background:#444;"></div>
<div class="r" style="left:881px;top:377px;width:4.5px;height:0.6999999999999886px;background:#888;"></div>
<div class="r" style="left:881px;top:392.5px;width:5.5px;height:0.6999999999999886px;background:#888;"></div>
<div class="r" style="left:902.5px;top:410.5px;width:4.5px;height:0.6999999999999886px;background:#888;"></div>
<div class="r" style="left:905.5px;top:427px;width:2.5px;height:0.6999999999999886px;background:#888;"></div>
<div class="r" style="left:885px;top:292.3px;width:3.5px;height:0.6999999999999886px;background:#bbb;"></div>
<div class="r" style="left:880.6px;top:308.4px;width:4.399999999999977px;height:0.7000000000000455px;background:#bbb;"></div>
<div class="r" style="left:854.4px;top:341.7px;width:147.80000000000007px;height:28.100000000000023px;background:transparent;border:3px solid #fdd000;box-sizing:border-box;"></div>
</body></html>
